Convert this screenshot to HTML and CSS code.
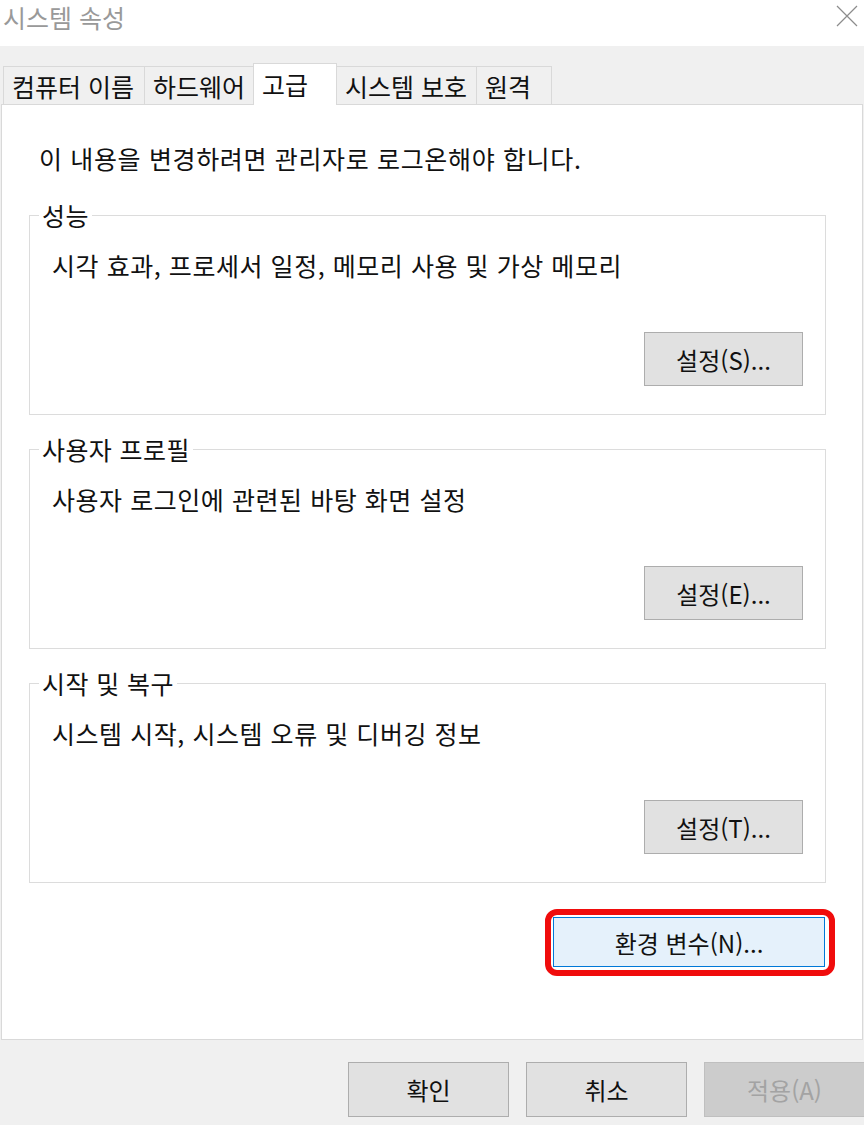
FILE: index.html
```html
<!DOCTYPE html>
<html lang="ko">
<head>
    <meta charset="UTF-8">
    <meta name="viewport" content="width=device-width, initial-scale=1.0">
    <title>시스템 속성</title>
    <link rel="stylesheet" href="styles.css">
</head>
<body>
    <div class="titlebar">
        <span class="title">시스템 속성</span>
        <svg class="close" width="22" height="22" viewBox="0 0 22 22">
            <path d="M1 1 L21 21 M21 1 L1 21" stroke="#8c8c8c" stroke-width="1.2" fill="none"/>
        </svg>
    </div>

    <div class="dialog">
        <div class="tabs">
            <div class="tab tab-name">컴퓨터 이름</div>
            <div class="tab tab-hw">하드웨어</div>
            <div class="tab tab-adv active">고급</div>
            <div class="tab tab-prot">시스템 보호</div>
            <div class="tab tab-remote">원격</div>
        </div>

        <div class="panel">
            <p class="notice">이 내용을 변경하려면 관리자로 로그온해야 합니다.</p>

            <fieldset class="group">
                <legend>성능</legend>
                <p class="desc">시각 효과, 프로세서 일정, 메모리 사용 및 가상 메모리</p>
                <button class="btn">설정(S)...</button>
            </fieldset>

            <fieldset class="group">
                <legend>사용자 프로필</legend>
                <p class="desc">사용자 로그인에 관련된 바탕 화면 설정</p>
                <button class="btn">설정(E)...</button>
            </fieldset>

            <fieldset class="group">
                <legend>시작 및 복구</legend>
                <p class="desc">시스템 시작, 시스템 오류 및 디버깅 정보</p>
                <button class="btn">설정(T)...</button>
            </fieldset>

            <div class="env-row">
                <span class="highlight">
                    <button class="btn btn-env">환경 변수(N)...</button>
                </span>
            </div>
        </div>

        <div class="footer">
            <button class="btn btn-footer">확인</button>
            <button class="btn btn-footer">취소</button>
            <button class="btn btn-footer" disabled>적용(A)</button>
        </div>
    </div>
</body>
</html>
```

FILE: styles.css
```css
body {
    margin: 0;
    background-color: #f0f0f0;
    font-family: "Noto Sans CJK KR", "Noto Sans", sans-serif;
    color: #111;
    overflow: hidden;
}

.titlebar {
    height: 46px;
    background-color: #fff;
    display: flex;
    align-items: flex-start;
    justify-content: space-between;
}

.title {
    font-size: 25px;
    line-height: 34px;
    color: #999;
    padding-left: 3px;
}

.close {
    margin: 5px 6px 0 0;
}

.dialog {
    padding-top: 17px;
}

.tabs {
    display: flex;
    align-items: flex-end;
    height: 41px;
    margin-left: 3px;
    position: relative;
    z-index: 1;
}

.tab {
    box-sizing: border-box;
    height: 38px;
    border: 1px solid #d9d9d9;
    border-bottom: none;
    margin-right: -1px;
    background-color: #f0f0f0;
    font-size: 25px;
    line-height: 38px;
    padding-left: 8px;
    white-space: nowrap;
}

.tab.active {
    height: 42px;
    margin-bottom: -1px;
    background-color: #fff;
    line-height: 40px;
}

.tab-name { width: 142px; }
.tab-hw { width: 110px; }
.tab-adv { width: 84px; }
.tab-prot { width: 141px; }
.tab-remote { width: 76px; }

.panel {
    box-sizing: border-box;
    height: 936px;
    margin-left: 1px;
    margin-right: 1px;
    background-color: #fff;
    border: 1px solid #d9d9d9;
    padding-top: 38px;
    display: flex;
    flex-direction: column;
}

.notice {
    margin: 0 0 29px 37px;
    font-size: 25px;
    line-height: 30px;
    letter-spacing: 0.65px;
}

.group {
    box-sizing: border-box;
    width: 797px;
    height: 213px;
    margin: 0 0 21px 27px;
    padding: 0 22px 27px 9px;
    border: 1px solid #dcdcdc;
    display: flex;
    flex-direction: column;
    align-items: flex-end;
}

.group legend {
    font-size: 25px;
    line-height: 26px;
    padding: 0 3px;
    letter-spacing: 0.4px;
}

.desc {
    align-self: flex-start;
    margin: 22px 0 0 13px;
    font-size: 25px;
    line-height: 30px;
    letter-spacing: 0.55px;
}

.btn {
    box-sizing: border-box;
    width: 159px;
    height: 54px;
    background-color: #e1e1e1;
    border: 1px solid #adadad;
    font-family: inherit;
    font-size: 24px;
    color: #111;
    padding: 0;
}

.group .btn {
    margin-top: 52px;
}

.env-row {
    display: flex;
    justify-content: flex-end;
    margin: 5px 27px 0 0;
}

.highlight {
    display: flex;
    border: 6px solid #f00c0c;
    border-radius: 12px;
    padding: 2px 4px 3px 2px;
}

.btn-env {
    width: 272px;
    height: 50px;
    background-color: #e5f1fb;
    border-color: #0078d7;
}

.footer {
    display: flex;
    justify-content: flex-end;
    gap: 17px;
    margin-top: 22px;
    margin-right: -1px;
}

.btn-footer {
    width: 161px;
    height: 55px;
}

.btn-footer:disabled {
    background-color: #cccccc;
    border-color: #bfbfbf;
    color: #a3a3a3;
}
```
